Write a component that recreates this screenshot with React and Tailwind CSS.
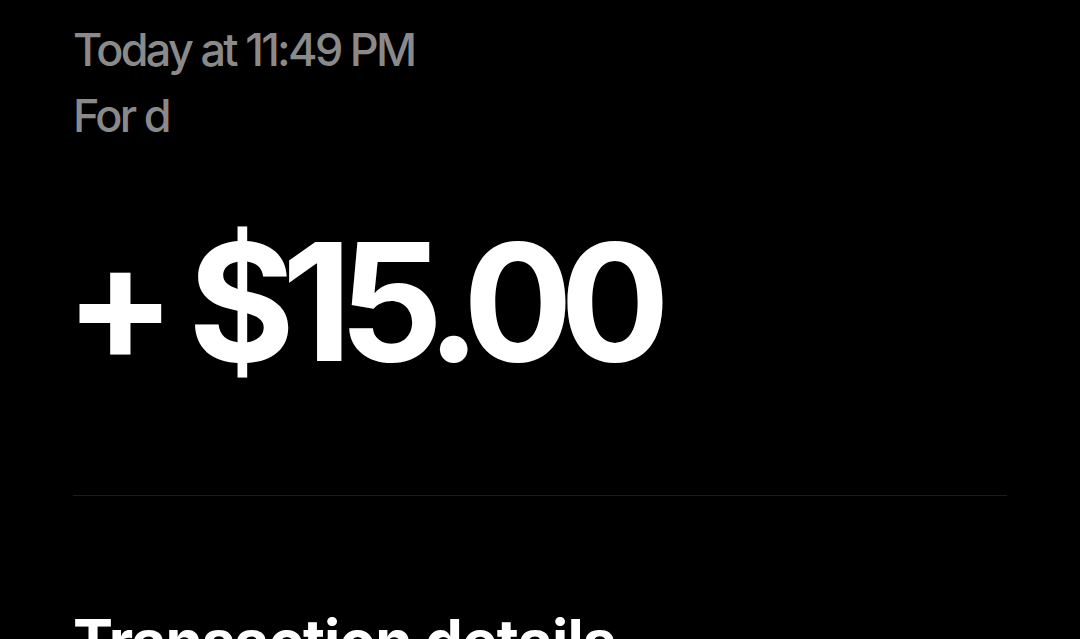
import React from 'react';

// Transaction receipt header
const App = () => {
  return (
    <div className="h-screen overflow-hidden bg-black px-[73px] pt-[17px] font-['Inter','Liberation_Sans',sans-serif]">
      <div className="text-[45px] leading-[66px] font-medium tracking-[-0.06em] text-[#8a8a8a]">
        <p>Today at 11:49 PM</p>
        <p>For d</p>
      </div>

      <div className="mt-[71px] -ml-[8px] text-[163px] leading-none font-bold tracking-[-0.08em] text-white">
        + $15.00
      </div>

      <div className="mt-[112px] border-t border-[#1c1c1c]" />

      <h2 className="mt-[115px] text-[60px] leading-none font-bold tracking-[-0.015em] text-white">
        Transaction details
      </h2>
    </div>
  );
};

export default App;
